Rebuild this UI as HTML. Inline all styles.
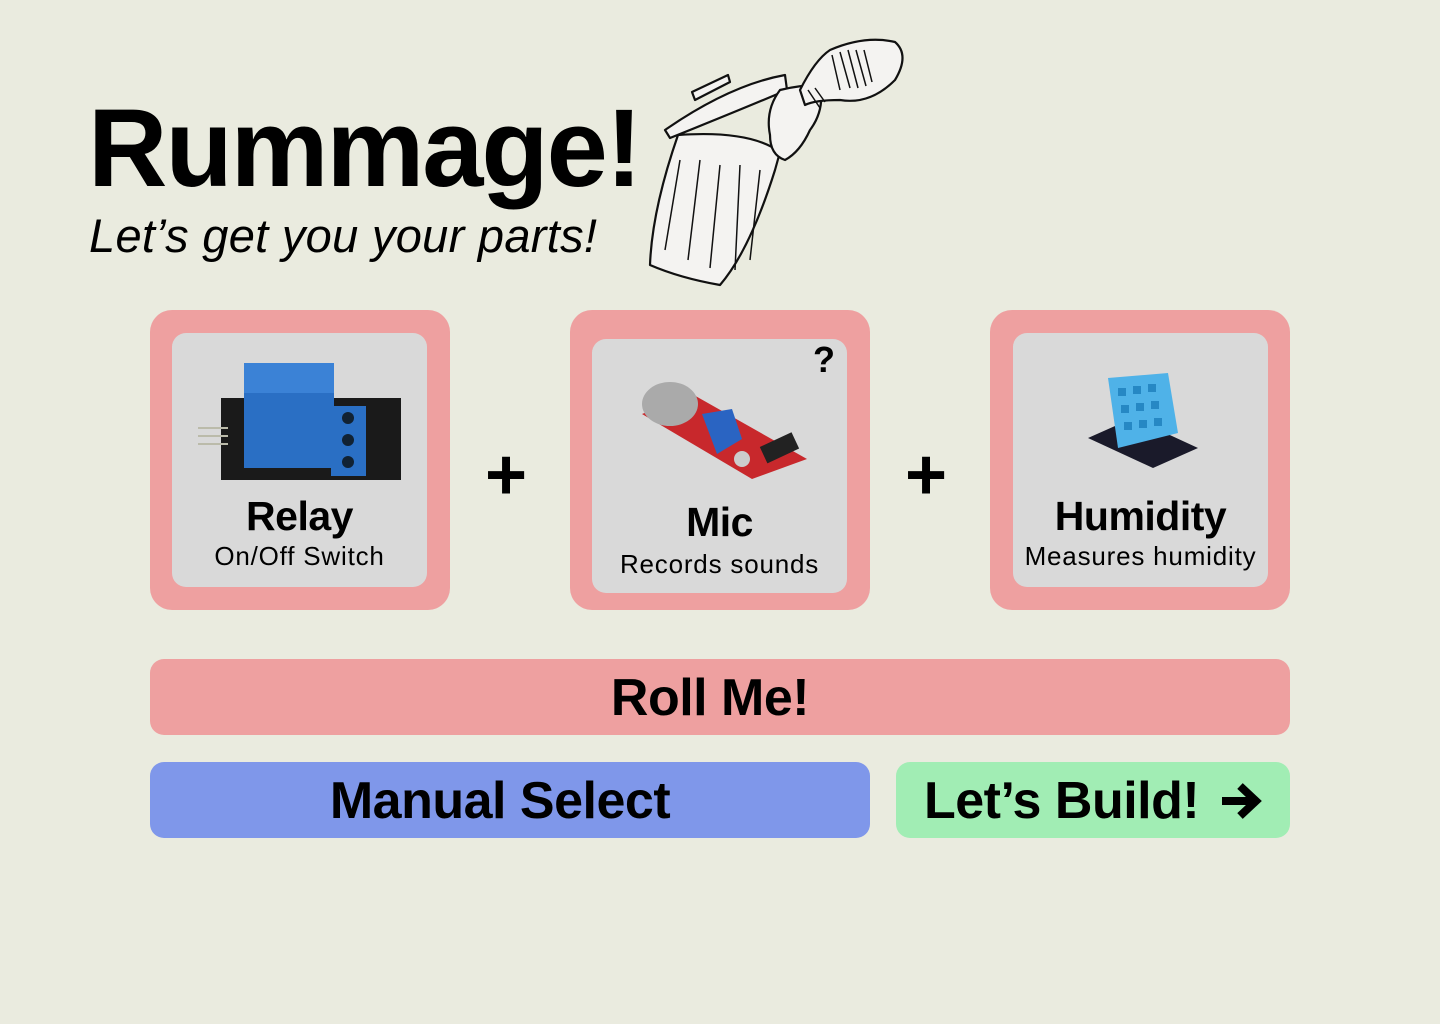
<!DOCTYPE html>
<html><head><meta charset="utf-8"><style>
*{margin:0;padding:0;box-sizing:border-box}
body{width:1440px;height:1024px;background:#EAEBDF;font-family:"Liberation Sans",sans-serif;position:relative;overflow:hidden;color:#000}
.abs{position:absolute}
h1{position:absolute;left:88px;top:89px;font-size:110px;font-weight:bold;letter-spacing:-2px;line-height:120px}
.sub{left:89px;top:208px;font-size:47px;font-style:italic;line-height:56px;letter-spacing:.3px}
.card{position:absolute;top:310px;width:300px;height:300px;background:#EEA0A0;border-radius:22px}
.in{position:absolute;background:#D9D9D9;border-radius:14px;width:255px;height:254px}
.t{position:absolute;left:0;right:0;text-align:center;font-weight:bold;font-size:41px;letter-spacing:-.5px}
.s{position:absolute;left:0;right:0;text-align:center;font-size:26px;letter-spacing:.8px}
.plus{position:absolute;top:440px;font-size:72px;font-weight:bold;line-height:70px}
.btn{position:absolute;border-radius:14px;text-align:center;font-weight:bold;font-size:52px;letter-spacing:-.5px;line-height:78px;height:76px}
</style></head><body>
<h1>Rummage!</h1>
<div class="abs sub">Let’s get you your parts!</div>
<svg class="abs" style="left:640px;top:30px" width="280" height="260" viewBox="0 0 280 260" fill="#F4F3F1" stroke="#111" stroke-width="2.2" stroke-linejoin="round">
<path d="M38 105 Q110 100 140 122 L135 140 Q110 220 80 255 Q40 248 10 235 Q12 180 38 105Z"/>
<path d="M25 100 Q90 55 145 45 L147 60 Q100 80 30 108Z"/>
<path d="M52 62 L88 45 L90 52 L55 70Z"/>
<path d="M140 60 Q160 55 180 55 Q185 80 170 100 Q160 122 145 130 Q130 125 130 105 Q125 80 140 60Z"/>
<path d="M160 60 Q175 30 190 20 Q225 5 255 12 Q270 25 255 50 Q230 75 200 70 Q175 70 165 75Z"/>
<g fill="none" stroke-width="1.5"><path d="M40 130 L25 220M60 130 L48 230M80 135 L70 238M100 135 L95 240M120 140 L110 230"/>
<path d="M192 25 L200 60M200 22 L210 58M208 20 L218 58M216 20 L226 56M224 20 L232 52M168 60 L180 78M175 58 L185 72"/></g>
</svg>

<div class="card" style="left:150px"><div class="in" style="left:22px;top:23px">
<svg class="abs" style="left:24px;top:25px" width="210" height="130" viewBox="0 0 210 130">
<rect x="25" y="40" width="180" height="82" fill="#1a1a1a"/>
<rect x="48" y="5" width="90" height="105" fill="#2a6fc4"/><rect x="48" y="5" width="90" height="30" fill="#3b82d6"/>
<rect x="135" y="48" width="35" height="70" fill="#2a6fc4"/>
<circle cx="152" cy="60" r="6" fill="#123"/><circle cx="152" cy="82" r="6" fill="#123"/><circle cx="152" cy="104" r="6" fill="#123"/>
<path d="M2 70h30M2 78h30M2 86h30" stroke="#bba" stroke-width="2"/>
</svg>
<div class="t" style="top:160px">Relay</div><div class="s" style="top:208px">On/Off Switch</div></div></div>

<div class="plus" style="left:485px">+</div>

<div class="card" style="left:570px"><div class="in" style="left:22px;top:29px">
<div class="abs" style="right:12px;top:0;font-size:36px;font-weight:bold">?</div>
<svg class="abs" style="left:40px;top:20px" width="180" height="140" viewBox="0 0 180 140">
<path d="M10 55 L120 120 L175 100 L60 35Z" fill="#c8282c"/>
<ellipse cx="38" cy="45" rx="28" ry="22" fill="#aaa"/>
<path d="M70 55 L100 50 L110 80 L85 95Z" fill="#2a64c2"/>
<rect x="130" y="80" width="35" height="18" fill="#222" transform="rotate(-25 147 89)"/>
<circle cx="110" cy="100" r="8" fill="#ccc"/>
</svg>
<div class="t" style="top:160px">Mic</div><div class="s" style="top:210px">Records sounds</div></div></div>

<div class="plus" style="left:905px">+</div>

<div class="card" style="left:990px"><div class="in" style="left:23px;top:23px">
<svg class="abs" style="left:70px;top:30px" width="120" height="110" viewBox="0 0 120 110">
<path d="M5 75 L70 105 L115 85 L50 55Z" fill="#1a1a2a"/>
<path d="M25 15 L85 10 L95 70 L35 85Z" fill="#4fb2e8"/>
<g fill="#2688c4"><rect x="35" y="25" width="8" height="8"/><rect x="50" y="23" width="8" height="8"/><rect x="65" y="21" width="8" height="8"/><rect x="38" y="42" width="8" height="8"/><rect x="53" y="40" width="8" height="8"/><rect x="68" y="38" width="8" height="8"/><rect x="41" y="59" width="8" height="8"/><rect x="56" y="57" width="8" height="8"/><rect x="71" y="55" width="8" height="8"/></g>
</svg>
<div class="t" style="top:160px">Humidity</div><div class="s" style="top:208px">Measures humidity</div></div></div>

<div class="btn" style="left:150px;top:659px;width:1140px;background:#EEA0A0;padding-right:20px">Roll Me!</div>
<div class="btn" style="left:150px;top:762px;width:720px;background:#7F97EA;padding-right:20px">Manual Select</div>
<div class="btn" style="left:896px;top:762px;width:394px;background:#A1EDB4;text-align:left;padding-left:28px">Let’s Build!
<svg style="position:absolute;left:324px;top:19px" width="42" height="40" viewBox="0 0 42 40"><path d="M2 20H34M20 5L36 20L20 35" fill="none" stroke="#000" stroke-width="8" stroke-linejoin="miter"/></svg></div>
</body></html>
